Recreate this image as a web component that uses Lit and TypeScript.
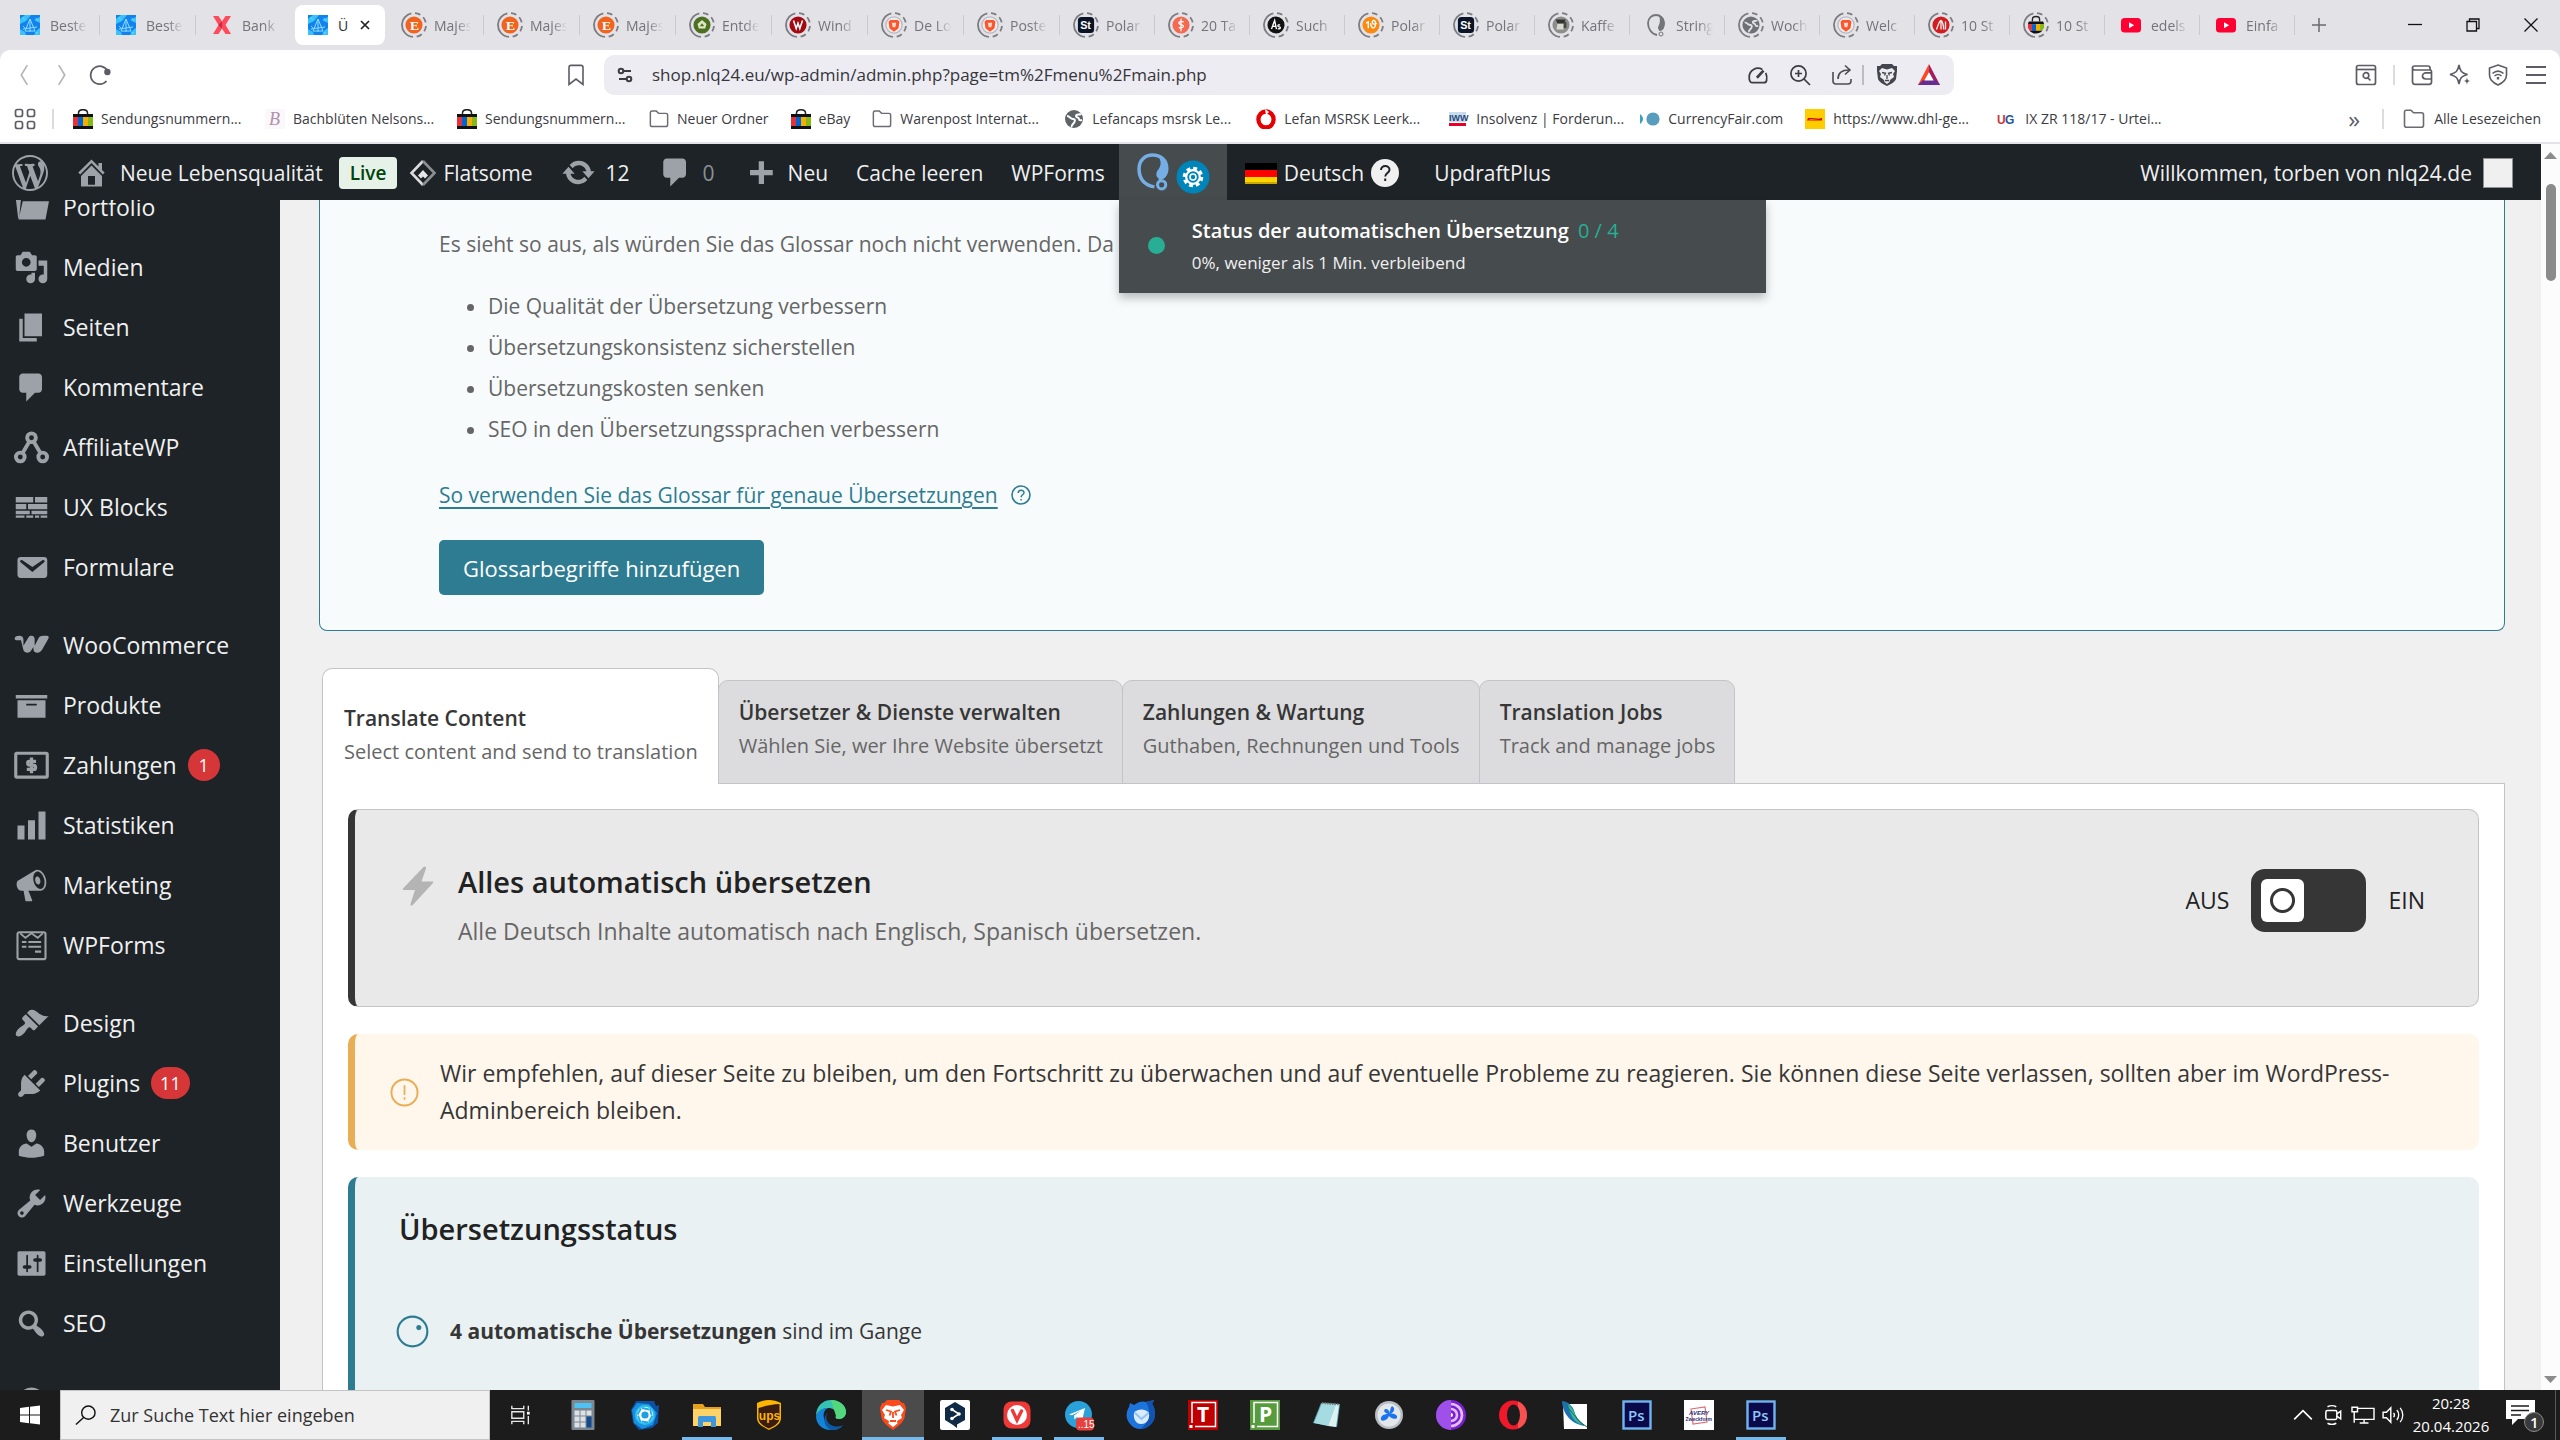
import { LitElement, html, css, svg, nothing } from "lit";
import type { TemplateResult } from "lit";
import { customElement, property, state } from "lit/decorators.js";
import { classMap } from "lit/directives/class-map.js";

/* ---------- icons ---------- */

const dash: Record<string, string> = {
  wordpress:
    "M20 10c0-5.51-4.49-10-10-10C4.48 0 0 4.49 0 10c0 5.52 4.48 10 10 10 5.51 0 10-4.48 10-10zM7.78 15.37L4.37 6.22c.55-.02 1.17-.08 1.17-.08.5-.06.44-1.13-.06-1.11 0 0-1.45.11-2.37.11-.18 0-.37 0-.58-.01C4.12 2.69 6.87 1.11 10 1.11c2.33 0 4.45.87 6.05 2.34-.68-.11-1.65.39-1.65 1.58 0 .74.45 1.36.9 2.1.35.61.55 1.36.55 2.46 0 1.49-1.4 5-1.4 5l-3.03-8.37c.54-.02.82-.17.82-.17.5-.05.44-1.25-.06-1.22 0 0-1.44.12-2.38.12-.87 0-2.33-.12-2.33-.12-.5-.03-.56 1.2-.06 1.22l.92.08 1.26 3.41zM17.41 10c.24-.64.74-1.87.43-4.25.7 1.29 1.05 2.71 1.05 4.25 0 3.29-1.73 6.24-4.4 7.78.97-2.59 1.94-5.2 2.92-7.78zM6.1 18.09C3.12 16.65 1.11 13.53 1.11 10c0-1.3.23-2.48.72-3.59C3.25 10.3 4.67 14.2 6.1 18.09zm4.03-6.63l2.58 6.98c-.86.29-1.76.45-2.71.45-.79 0-1.57-.11-2.29-.33.81-2.38 1.62-4.74 2.42-7.1z",
  home: "M16 8.5l1.53 1.53-1.06 1.06L10 4.6l-6.47 6.49-1.06-1.06L10 2.5l4 4v-2h2v4zm-6-2.46l6 5.99V18H4v-5.97zM12 17v-5H8v5h4z",
  update:
    "M10.2 3.28c3.53 0 6.43 2.61 6.92 6h2.08l-3.5 4-3.5-4h2.32c-.45-1.97-2.21-3.45-4.32-3.45-1.45 0-2.73.71-3.54 1.78L4.95 5.66C6.23 4.2 8.11 3.28 10.2 3.28zm-.4 13.44c-3.52 0-6.43-2.61-6.92-6H.8l3.5-4c1.17 1.33 2.33 2.67 3.5 4H5.48c.45 1.97 2.21 3.45 4.32 3.45 1.45 0 2.73-.71 3.54-1.78l1.71 1.95c-1.28 1.46-3.15 2.38-5.25 2.38z",
  comments: "M5 2h9c1.1 0 2 .9 2 2v7c0 1.1-.9 2-2 2h-2l-5 5v-5H5c-1.1 0-2-.9-2-2V4c0-1.1.9-2 2-2z",
  plus: "M17 8.5v3h-5v5H9v-5H4v-3h5v-5h3v5h5z",
  portfolio:
    "M.8 3h3.4L3 15.6l-.6.8zM5.2 5.6 8 4.4l1-1.2h4l1.2 1.2h4.4v1.2zM5 6.4h15l-2 10.4H2.6z",
  media:
    "M13 11V4c0-.55-.45-1-1-1h-1.67L9 1H5L3.67 3H2c-.55 0-1 .45-1 1v7c0 .55.45 1 1 1h10c.55 0 1-.45 1-1zM7 4.5c1.38 0 2.5 1.12 2.5 2.5S8.38 9.5 7 9.5 4.5 8.38 4.5 7 5.62 4.5 7 4.5zM14 6h5v10.5c0 1.38-1.12 2.5-2.5 2.5S14 17.88 14 16.5s1.12-2.5 2.5-2.5c.17 0 .34.02.5.05V9h-3V6zm-4 8.05V13h2v3.5c0 1.38-1.12 2.5-2.5 2.5S7 17.88 7 16.5 8.12 14 9.5 14c.17 0 .34.02.5.05z",
  page: "M6 15V2h10v13H6zm-1 1h8v2H3V5h2v11z",
  email:
    "M3.87 4h13.25C18.37 4 19 4.59 19 5.79v8.42c0 1.19-.63 1.79-1.88 1.79H3.87c-1.25 0-1.88-.6-1.88-1.79V5.79c0-1.2.63-1.79 1.88-1.79zm6.62 8.6l6.74-5.53c.24-.2.43-.66.13-1.07-.29-.41-.82-.42-1.17-.17l-5.7 3.86L4.8 5.83c-.35-.25-.88-.24-1.17.17-.3.41-.11.87.13 1.07z",
  blocks:
    "M1 4h10v3.2H1zM12 4h7v3.2h-7zM1 8h6v3H1zM8 8h11v3H8zM1 11.8h8v2H1zM10 11.8h9v2h-9zM1 14.6h5v1.2H1zM7 14.6h4v1.2H7zM12 14.6h2.4v1.2H12zM15.2 14.6H19v1.2h-3.8z",
  archive: "M19 4v2H1V4h18zM2 7h16v10H2V7zm11 3V9H7v1h6z",
  chart: "M18 18V2h-4v16h4zm-6 0V7H8v11h4zm-6 0v-8H2v8h4z",
  megaphone:
    "M18.15 5.94c.46 1.62.38 3.22-.02 4.48-.42 1.28-1.26 2.18-2.3 2.48-.16.06-.26.06-.4.06-.06.02-.12.02-.18.02-.06.02-.14.02-.22.02h-6.8l2.22 5.5c.02.14-.06.26-.14.34-.08.1-.24.16-.34.16H6.95c-.1 0-.26-.06-.34-.16-.08-.08-.16-.2-.14-.34l-1-5.5H4.25l-.02-.02c-.5.06-1.08-.18-1.54-.62s-.88-1.08-1.06-1.88c-.24-.8-.2-1.56-.02-2.2.18-.62.58-1.08 1.06-1.3l.02-.02 9-5.4c.1-.06.18-.1.24-.16.06-.04.14-.08.24-.12.16-.08.28-.12.5-.18 1.04-.3 2.24.1 3.22.98s1.84 2.24 2.26 3.86zm-2.58 5.98h-.02c.4-.1.74-.34 1.04-.7.58-.7.86-1.76.86-3.04 0-.64-.1-1.3-.28-1.98-.34-1.36-1.02-2.5-1.78-3.24s-1.68-1.1-2.46-.88c-.82.22-1.4.96-1.7 2-.32 1.04-.28 2.36.06 3.72.38 1.36 1 2.5 1.8 3.24.78.74 1.62 1.1 2.48.88zm-2.54-7.08c.22-.04.42-.02.62.04.38.16.76.48 1.02 1s.42 1.2.42 1.78c0 .3-.04.56-.12.8-.18.48-.44.84-.86.94-.34.1-.8-.06-1.14-.4s-.64-.86-.78-1.5c-.18-.62-.12-1.24.02-1.72s.48-.84.82-.94z",
  appearance:
    "M14.48 11.06L7.41 3.99l1.5-1.5c.5-.56 2.3-.47 3.51.32 1.21.8 1.43 1.28 2.91 2.1 1.18.64 2.45 1.26 4.45.85zm-.71.71L6.7 4.7 4.93 6.47c-.39.39-.39 1.02 0 1.41l1.06 1.06c.39.39.39 1.03 0 1.42-.6.6-1.43 1.11-2.21 1.69-.35.26-.7.53-1.01.84C1.43 14.23.4 16.08 1.4 17.07c.99 1 2.84-.03 4.18-1.36.31-.31.58-.66.85-1.02.57-.78 1.08-1.61 1.69-2.21.39-.39 1.02-.39 1.41 0l1.06 1.06c.39.39 1.02.39 1.41 0z",
  plugins:
    "M13.11 4.36L9.87 7.6 8 5.73l3.24-3.24c.35-.34 1.05-.2 1.56.32.52.51.66 1.21.31 1.55zm-8 1.77l.91-1.12 9.01 9.01-1.19.84c-.71.71-2.63 1.16-3.82 1.16H6.14L4.9 17.26c-.59.59-1.54.59-2.12 0-.59-.58-.59-1.53 0-2.12l1.24-1.24v-3.88c0-1.13.4-3.19 1.09-3.89zm7.26 3.97l3.24-3.24c.34-.35 1.04-.21 1.55.31.52.51.66 1.21.31 1.55l-3.24 3.25z",
  users:
    "M10 9.25c-2.27 0-2.73-3.44-2.73-3.44C7 4.02 7.82 2 9.97 2c2.16 0 2.98 2.02 2.71 3.81 0 0-.41 3.44-2.68 3.44zm0 2.57L12.72 10c2.39 0 4.52 2.33 4.52 4.53v2.49s-3.65 1.13-7.24 1.13c-3.65 0-7.24-1.13-7.24-1.13v-2.49c0-2.25 1.94-4.48 4.47-4.48z",
  tools:
    "M16.68 9.77c-1.34 1.34-3.3 1.67-4.95.99l-5.41 6.52c-.99.99-2.59.99-3.58 0s-.99-2.59 0-3.57l6.52-5.42c-.68-1.65-.35-3.61.99-4.95 1.28-1.28 3.12-1.62 4.72-1.06l-2.89 2.89 2.82 2.82 2.86-2.87c.53 1.58.18 3.39-1.08 4.65zM3.81 16.21c.4.39 1.04.39 1.43 0 .4-.4.4-1.04 0-1.43-.39-.4-1.03-.4-1.43 0-.39.39-.39 1.03 0 1.43z",
  settings:
    "M18 16V4c0-.55-.45-1-1-1H3c-.55 0-1 .45-1 1v12c0 .55.45 1 1 1h14c.55 0 1-.45 1-1zM8 11h1c.55 0 1 .45 1 1s-.45 1-1 1H8v1.5c0 .28-.22.5-.5.5s-.5-.22-.5-.5V13H6c-.55 0-1-.45-1-1s.45-1 1-1h1V5.5c0-.28.22-.5.5-.5s.5.22.5.5V11zm5-2h-1c-.55 0-1-.45-1-1s.45-1 1-1h1V5.5c0-.28.22-.5.5-.5s.5.22.5.5V7h1c.55 0 1 .45 1 1s-.45 1-1 1h-1v5.5c0 .28-.22.5-.5.5s-.5-.22-.5-.5V9z",
  search:
    "M12.14 4.18c1.87 1.87 2.11 4.75.72 6.89.12.1.22.21.36.31.2.16.47.36.81.59.34.24.56.39.66.47.42.31.73.57.94.78.32.32.6.65.84 1 .25.35.44.69.59 1.04.14.35.21.68.18 1-.02.32-.14.59-.36.81s-.49.34-.81.36c-.31.02-.65-.04-.99-.19-.35-.14-.7-.34-1.04-.59-.35-.24-.68-.52-1-.84-.21-.21-.47-.52-.77-.93-.1-.13-.25-.35-.47-.66-.22-.32-.4-.57-.56-.78-.16-.2-.29-.35-.44-.5-2.07 1.09-4.69.76-6.44-.98-2.14-2.15-2.14-5.64 0-7.78 2.15-2.15 5.63-2.15 7.78 0zm-1.41 6.36c1.36-1.37 1.36-3.58 0-4.95-1.37-1.37-3.59-1.37-4.95 0-1.37 1.37-1.37 3.58 0 4.95 1.36 1.37 3.58 1.37 4.95 0z",
  round: "M10 2a8 8 0 1 0 .01 0z",
};

/* Line and colour icons: view box size and content. */
const shapes: Record<string, [number, TemplateResult<2>]> = {
  affiliate: [20, svg`<g fill="none" stroke="currentColor" stroke-width="2.2"><circle cx="10" cy="4.4" r="2.5"/><circle cx="3.6" cy="15.4" r="2.5"/><circle cx="16.4" cy="15.4" r="2.5"/><path d="M8.8 6.6 4.9 13.2M11.2 6.6l3.9 6.6"/></g>`],
  woo: [20, svg`<path d="M.4 6.2C.4 5 1.200 4.400 3 4.400c1.600 0 2.400.8 2.400 2.400v3.400l3-5c.4-.6.8-.8 1.600-.8 1.200 0 1.800.8 1.800 2v3.800l2.200-4.400c.6-1 1.400-1.400 2.800-1.400h1.800c1.200 0 1.600.7 1 1.800l-3.400 6c-.8 1.300-1.600 1.900-2.800 1.900-1.600 0-2.300-.9-2.300-2.300v-.9l-1.400 2.1c-.6.8-1.300 1.100-2.200 1.100-1.500 0-2-.8-2.300-2.200L4 7H1.400c-.7 0-1-.3-1-.8z" fill="currentColor"/>`],
  money: [20, svg`<rect x="1" y="3" width="18" height="13.600" rx=".6" fill="none" stroke="currentColor" stroke-width="1.800"/><path d="M12.600 7.600H8.600c-1 0-1 2 0 2.100l2.800.2c1.200.1 1.200 2.300 0 2.300H7.300M10 5.400v9" fill="none" stroke="currentColor" stroke-width="1.900"/>`],
  wpforms: [20, svg`<rect x="2" y="2.400" width="16" height="15.400" rx="1" fill="none" stroke="currentColor" stroke-width="1.200"/><path d="M3.500 3l3 2.600 3.500-2.600 3.500 2.600 3-2.600" fill="none" stroke="currentColor"/><path d="M4.500 8h2.600M8.200 8h7.300M4.500 10.700h2.600M8.200 10.700h7.300M12 13.500h3.500" stroke="currentColor" stroke-width="1.200"/>`],
  flatsome: [28, svg`<path d="M14 2 2.500 14 14 26" fill="none" stroke="#dcdcde" stroke-width="2.600"/><path d="M14 2l11.500 12L14 26" fill="none" stroke="#8b8f94" stroke-width="2.600"/><path d="M9 16.500 14 11l5 5.500-3 3-2-2-2 2z" fill="#e6e6e8"/>`],
  otgs: [38, svg`<path d="M17 33C6 31 2 24 2 15 2 7 8 2 15 2c8 0 14 5 14 13 0 6-4 10-8 10" fill="none" stroke="#74aee4" stroke-width="3.400"/><path d="M20 3c6 1 10 6 10 12 0 5-2 9-5 10-4 1-7-2-6-5 0-3 4-5 4-10 0-3-1-5-3-7z" fill="#74aee4"/><circle cx="24" cy="31" r="4" fill="none" stroke="#74aee4" stroke-width="3"/>`],
  gear: [34, svg`<circle cx="17" cy="17" r="16.500" fill="#0085ba"/><circle cx="17" cy="17" r="8.600" fill="none" stroke="#fff" stroke-width="3.400" stroke-dasharray="3.800 2.950"/><circle cx="17" cy="17" r="6.800" fill="none" stroke="#fff" stroke-width="2.200"/><circle cx="17" cy="17" r="3" fill="none" stroke="#fff" stroke-width="1.600"/>`],
  flag: [32, svg`<path d="M0 6h32v7H0z" fill="#000"/><path d="M0 13h32v8H0z" fill="#f00"/><path d="M0 20h32v7H0z" fill="#ffd500"/><path d="M0 25h32v2H0z" fill="#c9a800"/>`],
  help: [22, svg`<circle cx="11" cy="11" r="9" fill="none" stroke="currentColor" stroke-width="1.600"/><path d="M8.200 9c0-3.600 5.800-3.600 5.800-.3 0 2-2.900 2.200-2.900 4.500M11.100 15v1.600" fill="none" stroke="currentColor" stroke-width="1.500"/>`],
  helpFilled: [28, svg`<circle cx="14" cy="14" r="14" fill="#f0f0f1"/><path d="M10 11c0-5.500 8.500-5 8.500-.3 0 3.300-4.300 3.300-4.300 6.800M14.200 19.500v2.600" fill="none" stroke="#1d2327" stroke-width="2"/>`],
  bolt: [40, svg`<path d="M25.500 1 5 22.500c-.6.9-.2 1.500.8 1.500H17L12.500 38c-.4 1.600 1 2.200 2 1.200L35 17c.7-1 .3-1.500-.8-1.500H23.500L28 2.500C28.500.8 26.800-.3 25.500 1z" fill="#b4b4b4"/>`],
  warn: [30, svg`<circle cx="15" cy="15" r="13.500" fill="none" stroke="#e8ad55" stroke-width="2"/><path d="M15 7.500v10M15 20v2.500" stroke="#e8ad55" stroke-width="1.800"/>`],
  spinner: [34, svg`<circle cx="17" cy="17" r="15.300" fill="none" stroke="#2e7c92" stroke-width="2.200"/><circle cx="23.500" cy="13" r="2.600" fill="#2e7c92"/>`],

  back: [20, svg`<path d="M13 1 7.500 10 13 19" fill="none" stroke="#b4b4ba" stroke-width="1.500"/>`],
  forward: [20, svg`<path d="M7 1l5.500 9L7 19" fill="none" stroke="#b4b4ba" stroke-width="1.500"/>`],
  reload: [22, svg`<path d="M18.500 6.800A9 9 0 1 0 17.500 17" fill="none" stroke="#5c5c66" stroke-width="1.700"/><circle cx="18.400" cy="8" r="3.200" fill="#5c5c66"/>`],
  bookmark: [22, svg`<path d="M4 3.500C4 2 4.600 1.400 6 1.400h10c1.400 0 2 .6 2 2.100v17l-7-5.500-7 5.500z" fill="none" stroke="#5c5c66" stroke-width="1.600"/>`],
  tune: [18, svg`<g fill="none" stroke="#3c3c44" stroke-width="2"><circle cx="5" cy="5" r="2.300"/><path d="M8 5h7"/><circle cx="13" cy="13" r="2.300"/><path d="M3 13h7"/></g>`],
  gauge: [20, svg`<path d="M4.500 17C2.500 16.500 2 15 2 12a8 8 0 0 1 12-7M17 8c1 2 1.200 5 .8 7-.3 1.400-1 2-2.300 2h-11" fill="none" stroke="#3c3c44" stroke-width="1.600"/><path d="M9 12.500 15 6" stroke="#3c3c44" stroke-width="2.400"/>`],
  zoomIn: [22, svg`<g fill="none" stroke="#3c3c44" stroke-width="1.700"><circle cx="9.500" cy="9.500" r="7.600"/><path d="M15 15l6 6M9.500 6v7M6 9.500h7"/></g>`],
  share: [22, svg`<g fill="none" stroke="#4c4c55" stroke-width="1.600"><path d="M2 8v9c0 2 1 3 3 3h12c2 0 3-1 3-3v-2"/><path d="M7 15c0-6 4-9 11-9M14 1.500 19 6l-5 4.500"/></g>`],
  braveDark: [22, svg`<path d="M6 0h10l2 2h3v5l-1 8c-1 3-5 5-9 7-4-2-8-4-9-7L1 7V2h3z" fill="#45454f"/><path d="M6 4l5 1.500L16 4l3 3-2 3 1 3-4 3-.5 2L11 20l-2.500-2-.5-2-4-3 1-3-2-3z" fill="#ededf2"/><path d="M6 8.500l3.500.8-1 2.200M16 8.500l-3.500.8 1 2.200M11 11v4M9 16.500h4" stroke="#45454f" fill="none" stroke-width="1.300"/>`],
  bat: [22, svg`<path d="M11 0 0 21h5L11 9z" fill="#ff4724"/><path d="M11 0l11 21h-5L11 9z" fill="#9e1f63"/><path d="M0 21h22L17.500 16H5z" fill="#662d91"/><path d="M11 8.200 6.300 16.400h9.400z" fill="#fff"/>`],
  sideSearch: [22, svg`<g fill="none" stroke="#5c5c66" stroke-width="1.700"><rect x="1.500" y="1.500" width="19" height="19" rx="2"/><path d="M1.500 5.500h19"/><circle cx="11" cy="11.500" r="2.800"/><path d="M13 14l2.500 2.500"/></g>`],
  wallet: [22, svg`<g fill="none" stroke="#5c5c66" stroke-width="1.700"><path d="M19 6V4c0-1.500-.8-2-2-2H3.500C2 2 1.500 3 1.500 4s.8 2 2 2H19c1 0 1.500.6 1.500 1.600V18c0 1.500-1 2.300-2.300 2.300H4c-1.600 0-2.500-1-2.500-2.500V4M20.500 8.800h-5.500c-2 0-3.500 1.500-3.500 3.200s1.500 3 3.500 3h5.500"/></g>`],
  sparkle: [22, svg`<path d="M10 1c1 6 2.500 8 8.500 9.500-6 1.500-7.500 3.500-8.500 9.500C9 14 7 12 1 10.500 7 9 9 7 10 1z" fill="none" stroke="#5c5c66" stroke-width="1.600"/><path d="M18 13.500c.3 2.600 1 3.200 3.600 3.600-2.600.4-3.300 1-3.600 3.600-.4-2.600-1-3.200-3.600-3.600 2.600-.4 3.200-1 3.600-3.600z" fill="#5c5c66"/>`],
  vpn: [22, svg`<g fill="none" stroke="#5c5c66" stroke-width="1.600"><path d="M11 1l8.500 3v7c0 5-4 8-8.500 10-4.500-2-8.500-5-8.500-10V4z"/><path d="M5.500 9.500c3.500-3 7.500-3 11 0M7.500 12c2.300-2 4.700-2 7 0"/><path d="M11 13v2.500" stroke-width="2.400"/></g>`],
  menu: [22, svg`<path d="M1 3h20M1 11h20M1 19h20" stroke="#5c5c66" stroke-width="2"/>`],
  apps: [22, svg`<g fill="none" stroke="#5c5c66" stroke-width="1.700"><rect x="1.500" y="1.500" width="7" height="7" rx="2"/><rect x="13.500" y="1.500" width="7" height="7" rx="2"/><rect x="1.500" y="13.500" width="7" height="7" rx="2"/><rect x="13.500" y="13.500" width="7" height="7" rx="2"/></g>`],
  folder: [22, svg`<path d="M1.500 4c0-1.200.6-1.800 1.800-1.800H8l2.500 2.600h8c1.300 0 2 .6 2 1.900v10.500c0 1.300-.7 2-2 2H3.500c-1.300 0-2-.7-2-2z" fill="none" stroke="#6b6b74" stroke-width="1.600"/>`],
  ebay: [20, svg`<path d="M5.500 6V4C5.500-.5 14.500-.5 14.500 4V6" fill="none" stroke="#222" stroke-width="1.500"/><path d="M0 5h20v3H0z" fill="#111"/><path d="M0 8h5v9H0z" fill="#e53238"/><path d="M5 8h5v9H5z" fill="#0064d2"/><path d="M10 8h5v9h-5z" fill="#f5af02"/><path d="M15 8h5v9h-5z" fill="#86b817"/><path d="M0 17h20v3H0z" fill="#111"/>`],
  ebayRound: [20, svg`<path d="M6 6V3.500C6-.5 14-.5 14 3.500V6" fill="none" stroke="#222" stroke-width="1.500"/><path d="M2 6h16l1 3H1z" fill="#111"/><path d="M1 9h4.500v7.500H3L1 13z" fill="#e53238"/><path d="M5.500 9H10v7.500H5.500z" fill="#0064d2"/><path d="M10 9h4.500v7.500H10z" fill="#f5af02"/><path d="M14.500 9H19v4l-2 3.500h-2.500z" fill="#86b817"/><path d="M3 16.500h14c-3 4-11 4-14 0z" fill="#111"/>`],
  globe: [20, svg`<circle cx="10" cy="10" r="9" fill="#5f6368"/><path d="M3 7c3 0 3 3 6 3s2 3 0 5-1 3-1 3M17 5c-2 1-5 0-5 2s3 1 3 3 3 1 3 1" fill="none" stroke="#fff" stroke-width="2"/>`],
  script: [20, svg`<rect width="20" height="20" fill="#fbf8fb"/><text x="4" y="16" font-family="Liberation Serif, serif" font-style="italic" font-size="18" fill="#b48fae">B</text>`],
  vodafone: [20, svg`<ellipse cx="10" cy="10.500" rx="7.600" ry="8" fill="none" stroke="#e60000" stroke-width="4.300"/><path d="M9 0l4 3-3 3z" fill="#fff"/>`],
  iww: [20, svg`<path d="M1 3h17v10H1z" fill="#c9dcec"/><text x="1" y="12" font-family="Liberation Sans, sans-serif" font-weight="700" font-size="9" fill="#1f4a7a">IWW</text><path d="M1 14h17v3H1z" fill="#e4002b"/>`],
  currency: [20, svg`<path d="M0 5c4 3 4 7 0 10z" fill="#3f9fc0"/><circle cx="13" cy="10" r="6.600" fill="#589dbd"/>`],
  dhl: [20, svg`<path d="M0 0h20v20H0z" fill="#fc0"/><path d="M3 9h14v2.500H2z" fill="#d40511"/><path d="M4 11l12-2" stroke="#fc0" stroke-width=".6"/>`],
  ug: [20, svg`<text x="0" y="15" font-family="Liberation Sans, sans-serif" font-weight="700" font-size="12" fill="#d0343c">U</text><text x="8" y="15" font-family="Liberation Sans, sans-serif" font-weight="700" font-size="12" fill="#2456a0">G</text>`],

  water: [20, svg`<rect width="20" height="20" fill="#1283ee"/><path d="M0 4 5 0h6L6 6l-6 3zM20 2v6l-6-3zM0 20v-6l5 3 1 3zM20 20h-6l3-5 3-2z" fill="#38c3fb"/><path d="M10 4l5 12H5zM10 4v13M3 14l14-2" fill="none" stroke="#8fdcff" stroke-width="1"/><path d="M2 2l3 3M16 3l2 3M3 11l2 2M15 17l3 1" stroke="#6fd3ff"/>`],
  redx: [20, svg`<path d="M1 1h5.500l3.500 5.500L13.500 1H19l-5.500 9L19 19h-5.500L10 13.500 6.500 19H1l5.500-9z" fill="#ff4a5c"/><path d="M10 6.500v7L6.500 10z" fill="#c42a45"/>`],
  etsy: [20, svg`<circle cx="10" cy="10" r="9.500" fill="#f1641e"/><text x="5.600" y="15.500" font-family="Liberation Serif, serif" font-weight="700" font-size="15" fill="#fff">E</text>`],
  green: [20, svg`<circle cx="10" cy="10" r="9.500" fill="#4c7021"/><path d="M10 4.500 15 9l-1.500 5h-7L5 9z" fill="#dfe8c4"/><path d="M10 8l2.500 3.500h-5z" fill="#4c7021"/>`],
  redw: [20, svg`<circle cx="10" cy="10" r="9.500" fill="#a00a10"/><path d="M5 5l3 9 2-6 2 6 3-9" fill="none" stroke="#fff" stroke-width="1.700"/>`],
  brave: [20, svg`<circle cx="10" cy="10" r="9" fill="#f1ecec" stroke="#b9b9c0" stroke-width="1.500"/><path d="M6 4.500h8l2 2-1 7-5 4-5-4-1-7z" fill="#fb542b"/><path d="M7.500 7.500h5l-1 5h-3z" fill="#ffd9cd"/>`],
  st: [20, svg`<rect x="1" y="1" width="18" height="18" rx="4" fill="#0b1426"/><text x="3.500" y="14.500" font-family="Liberation Sans, sans-serif" font-weight="700" font-size="12" fill="#fff">St</text>`],
  rod: [20, svg`<circle cx="10" cy="10" r="9.500" fill="#f46a50"/><path d="M10 3v14M13 6.500c-6-1.500-7 2-3 3s4 4-2.500 3.500" fill="none" stroke="#fff" stroke-width="1.400"/>`],
  as: [20, svg`<circle cx="10" cy="10" r="9.500" fill="#111"/><path d="M5 14.500 8.500 5l2 9.500M6 11.500h4M14.500 10c-3-1-3 2-1 2s2 3-1.500 2.200" fill="none" stroke="#fff" stroke-width="1.500"/>`],
  vita: [20, svg`<circle cx="10" cy="10" r="9.500" fill="#f88a12"/><path d="M4.500 8 7 6.500v7M9.500 8c1 8 5.500 6 5.500 0 0-4.500-4-3.500-3.500-.5.300 2 3 1.800 5 .7" fill="none" stroke="#fff" stroke-width="1.500"/>`],
  photo: [20, svg`<circle cx="10" cy="10" r="9.500" fill="#8d8d8a"/><path d="M4 4h11l-1 4H6z" fill="#333"/><path d="M6 9h7v6H5z" fill="#d9d9d4"/><path d="M13 6l3 1v6l-3 1z" fill="#48483f"/>`],
  string: [26, svg`<path d="M14 23C8 22 5 16 5 11c0-5 4-8 8-8s8 3 8 8-2 7-5 7" fill="none" stroke="#74747b" stroke-width="1.800"/><path d="M16 3.500c4 1 5.500 4 5.500 7.500s-1.500 7-4 7-3-2-2-4c1.500-3 2-6 .5-10.500z" fill="#74747b"/><circle cx="18" cy="22" r="2" fill="none" stroke="#74747b"/>`],
  globeSmall: [20, svg`<circle cx="10" cy="10" r="9.500" fill="#6d7176"/><path d="M3 7c3 0 3 3 6 3s2 3 0 5-1 3-1 3M17 5c-2 1-5 0-5 2s3 1 3 3 3 1 3 1" fill="none" stroke="#e3e2e7" stroke-width="2"/>`],
  redA: [20, svg`<circle cx="10" cy="10" r="9.500" fill="#cf1d22"/><path d="M5 15c2-6 4-10 5-10s3 5 3 10M10 5v10M15 6v9" fill="none" stroke="#fbe9e4" stroke-width="1.500"/>`],
  youtube: [20, svg`<rect y="3" width="20" height="14.500" rx="3.500" fill="#f03"/><path d="M8 7.200v6l5.200-3z" fill="#fff"/>`],

  windows: [20, svg`<path d="M0 3l9-1.200v7.700H0zM10 1.700 20 .4v9.100H10zM0 10.500h9v7.700L0 17zM10 10.500h10v9.100l-10-1.300z" fill="#fff"/>`],
  lens: [22, svg`<circle cx="14" cy="8" r="7" fill="none" stroke="#111" stroke-width="1.500"/><path d="M9 13l-8 7.500" stroke="#111" stroke-width="1.500"/>`],
  taskview: [24, svg`<path d="M2 2v3h13V2M2 22v-3h13v3M2 8.500h13v7H2zM20 2v5M20 13v9" fill="none" stroke="#e8e8e8" stroke-width="1.500"/><path d="M18.500 8.500h3v3h-3z" fill="#fff"/>`],
  calc: [30, svg`<rect x="3.500" width="23" height="30" rx="1" fill="#7d8790"/><path d="M6.500 3h17v5h-17z" fill="#4cc2f5"/><g fill="#dce1e5"><path d="M6.500 10.500h5v5h-5zM12.500 10.500h5v5h-5zM18.500 10.500h5v5h-5zM6.500 16.500h5v5h-5zM12.500 16.500h5v5h-5zM6.500 22.500h5v5h-5zM12.500 22.500h5v5h-5z"/></g><path d="M18.500 16.500h5v11h-5z" fill="#134a8c"/>`],
  aperture: [30, svg`<path d="M6 1h18l2 5 3-1-1 18-6 5-13 2-6-7L1 10z" fill="#0d4fa0"/><path d="M2 10l5-7 12 1 8 9-4 12-11 4-8-6z" fill="#1a8fe0"/><circle cx="15" cy="15" r="10" fill="#27c4ef"/><circle cx="15" cy="15" r="8" fill="#fff"/><path d="M12 8l7 1.500M20 8.500l1.500 6.500M22.500 15.500l-3.500 6M18.500 22.500l-7-1M10.500 22l-2.500-6.500M7.500 14.500l3.500-6" stroke="#27a9e6" stroke-width="1.800"/><circle cx="15" cy="15" r="3.600" fill="#1b9fe0"/>`],
  explorer: [30, svg`<path d="M1 4h10l2 3h16v19H1z" fill="#e5a01c"/><path d="M1 9h28v17H1z" fill="#fdd267"/><path d="M6 27v-9c0-1.500.8-2 2-2h14c1.200 0 2 .5 2 2v9h-5v-5h-8v5z" fill="#3d97de"/>`],
  ups: [30, svg`<path d="M3 3c8-4 16-4 24 0v15c0 6-6 9-12 12C9 27 3 24 3 18z" fill="#ffb500"/><path d="M4.500 8c7-2 14-4 21-4v14c0 5-5 8-10.500 10.500C9.500 26 4.500 23 4.500 18z" fill="#3b1c10"/><text x="4.800" y="19.500" font-family="Liberation Sans, sans-serif" font-weight="700" font-size="12" fill="#ffb500">ups</text>`],
  edge: [30, svg`<path d="M0 16C0 6 7 0 15 0c9 0 15 6 15 12 0 4-3 7-7 7-3 0-4-1-3-3 1-4-2-8-7-8C7 8 2 11 0 16z" fill="#36c3b4"/><path d="M15 0c9 0 15 6 15 12 0 4-3 7-7 7-3 0-4-1-3-3z" fill="#53d77c"/><path d="M0 16c2-6 7-8 12-8-4 2-5 6-4 10 1 6 7 10 13 9 3 0 5-1 6-2-3 4-7 5-12 5C6 30 0 24 0 16z" fill="#1484d8"/><path d="M12 12c-3 4-2 10 3 13 4 2 9 2 12 0-3 4-7 5-12 5-7-3-9-12-3-18z" fill="#0c59a4"/>`],
  braveTask: [30, svg`<path d="M9 0h12l3 3h2l2 5-1.500 10C25 23 19 27 15 30 11 27 5 23 3.500 18L2 8l2-5h2z" fill="#fb4a1c"/><path d="M8 5l7 1.500L22 5l4 5-3 5 1 3-5 3 .5 2.500L15 27l-4.500-3.500.5-2.500-5-3 1-3-3-5z" fill="#fff"/><path d="M8 10l5 1.500-1.500 4M22 10l-5 1.500 1.500 4M15 12v6M12 21h6" fill="none" stroke="#fb4a1c" stroke-width="1.800"/>`],
  deepl: [30, svg`<rect width="30" height="30" rx="2" fill="#fff"/><path d="M15 2l10 6v12l-8 4.500V28l-4-3-8-5V8z" fill="#0f2b46"/><path d="M12 9.500l7 4.500-7 4.500" fill="none" stroke="#fff" stroke-width="1.500"/><circle cx="12" cy="9.500" r="1.800" fill="#fff"/><circle cx="19" cy="14" r="1.800" fill="#fff"/><circle cx="12" cy="18.500" r="1.800" fill="#fff"/>`],
  vivaldi: [30, svg`<rect x="1.500" y="1.500" width="27" height="27" rx="8" fill="#ef3939"/><circle cx="15" cy="15" r="10" fill="#fff"/><path d="M10.500 10.500 15 20l4.500-9" fill="none" stroke="#ef3939" stroke-width="3.400" stroke-linecap="round"/>`],
  telegram: [30, svg`<circle cx="14.500" cy="14.500" r="13.500" fill="#2aa1da"/><path d="M5 14.500 21 8l-3 13-5-4-2.500 2.500-.5-4 7-5-9 4.700z" fill="#fff"/><rect x="12" y="17.500" width="18" height="13" rx="4" fill="#e8403c"/><text x="14" y="28" font-family="Liberation Sans, sans-serif" font-size="10" fill="#fff">..15</text>`],
  thunderbird: [30, svg`<path d="M3 7l1-4 4 2c5-4 9-4 12-3l8-2-2 4c4 5 4 14 0 19-5 7-16 8-21 2C-1 19 0 12 3 7z" fill="#1d74da"/><path d="M20 2l8-2-2 4c4 5 4 14 0 19-3 4-7 6-11 6 8-7 11-18 5-27z" fill="#1153b0"/><path d="M8 13c4-5 12-4 15 0 1 6-2 11-8 11-5 0-8-5-7-11z" fill="#d8ecfd"/><path d="M9 13l6.500 6 7-6" fill="none" stroke="#8fc2f5" stroke-width="2"/>`],
  tile: [30, svg`<rect width="30" height="30" fill="#c00000"/><path d="M4 23V2.500h23.500v24H7" fill="none" stroke="#fff" stroke-width="1.500"/><rect x="1.500" y="25" width="3" height="3" fill="#fff"/><text x="9" y="22" font-family="Open Sans, sans-serif" font-weight="700" font-size="21" fill="#fff">T</text>`],
  tileP: [30, svg`<rect width="30" height="30" fill="#579c3c"/><path d="M4 23V2.500h23.500v24H7" fill="none" stroke="#fff" stroke-width="1.500"/><rect x="1.500" y="25" width="3" height="3" fill="#fff"/><text x="9" y="22" font-family="Open Sans, sans-serif" font-weight="700" font-size="21" fill="#fff">P</text>`],
  notes: [30, svg`<path d="M9 3l19 1-3 23-24-4z" fill="#57a9b8"/><path d="M10 3l14 1-8 22-14-3z" fill="#a7dbe2"/><path d="M24 4l3 1-3 22-8-1z" fill="#dff2f3"/><path d="M10 3l17 1.500" stroke="#777" stroke-width="2" stroke-dasharray="1.500 1"/>`],
  swirl: [30, svg`<circle cx="15" cy="15" r="14" fill="#b9bec5"/><circle cx="15" cy="15" r="11.500" fill="#e4e7ea"/><path d="M18 6c4 2 2 7-2 8 4-1 8 1 7 4-3 2-6 0-8-2-1 3-5 6-8 4-1-4 3-6 7-6-3-1-5-3-3-5 3 0 5 2 5 5 0-3 0-6 2-8z" fill="#1b74ee"/>`],
  tor: [30, svg`<circle cx="15" cy="15" r="15" fill="#7d1fd0"/><path d="M15 0a15 15 0 0 0 0 30z" fill="#a050ea"/><path d="M15 4a11 11 0 0 1 0 22M15 9a6 6 0 0 1 0 12" fill="none" stroke="#e0bdfb" stroke-width="2.600"/><path d="M15 13a2 2 0 0 1 0 4z" fill="#fff"/>`],
  opera: [30, svg`<ellipse cx="15" cy="15" rx="14" ry="14.500" fill="#f0182b"/><path d="M20 1.500c6 2 9 8 9 13.500s-3 12-9 13.500z" fill="#f9514f"/><ellipse cx="15.500" cy="15" rx="6.500" ry="10.500" fill="#1c1c1c"/>`],
  feather: [30, svg`<path d="M3 4h24v25H4z" fill="#fdfdfd"/><path d="M2 1c8 1 12 7 13 13l3 5 7 7C16 25 3 18 2 1z" fill="#1d6fb8"/><path d="M8 4c5 4 7 9 8 14l6 7C15 23 10 16 8 4z" fill="#38b596"/><path d="M4 3l16 19 7 5" fill="none" stroke="#1c7a48"/>`],
  ps: [30, svg`<rect x="1.500" y="1.500" width="27" height="27" fill="#0a0a4a" stroke="#6fb4f0" stroke-width="2.400"/><text x="6" y="20.500" font-family="Open Sans, sans-serif" font-weight="600" font-size="15" fill="#8fc6fa">Ps</text>`],
  avery: [30, svg`<rect width="30" height="30" fill="#fff"/><path d="M7 9l14-2 2 15-14 2z" fill="none" stroke="#e06a74" stroke-width="1.200"/><text x="5" y="15" font-family="Liberation Sans, sans-serif" font-weight="700" font-style="italic" font-size="6" fill="#2a2f7c">AVERY</text><text x="1.500" y="21" font-family="Liberation Sans, sans-serif" font-weight="700" font-size="5" fill="#2a2f7c">Zweckform</text>`],
  caret: [20, svg`<path d="M2 14l8-8 8 8" fill="none" stroke="#fff" stroke-width="1.500"/>`],
  meet: [20, svg`<rect x="3.500" y="6" width="10" height="8" rx="1.500" fill="none" stroke="#fff" stroke-width="1.400"/><path d="M13.500 9l3.500-2.500v7L13.500 11M5 2.500c3-1.500 5-1.500 8 0M5 17.500c3 1.500 5 1.500 8 0" fill="none" stroke="#fff" stroke-width="1.300"/>`],
  network: [20, svg`<path d="M5 4h15v10H2M11 14v3M7 17.200h8M2 7v10" fill="none" stroke="#fff" stroke-width="1.300"/><path d="M0 3h5v4H0z" fill="none" stroke="#fff" stroke-width="1.300"/>`],
  volume: [20, svg`<path d="M1 7.500h3l4-4v13l-4-4H1z" fill="none" stroke="#fff" stroke-width="1.300"/><path d="M10.500 8c1 1.200 1 2.800 0 4M13.500 5.500c2.200 2.500 2.200 6.500 0 9M16.500 3.500c3.200 3.800 3.200 9.200 0 13" fill="none" stroke="#fff" stroke-width="1.200"/>`],
  note: [38, svg`<path d="M0 4h29v19H12l-6 6v-6H0z" fill="#fff"/><path d="M5 10h18M5 14.500h18M5 19h10" stroke="#1c1c1c" stroke-width="1.400"/><circle cx="28" cy="26" r="9.500" fill="#3a3a3a" stroke="#8a8a8a"/><text x="24" y="31.500" font-family="Open Sans, sans-serif" font-weight="600" font-size="15" fill="#fff">1</text>`],
};

@customElement("ui-icon")
export class UiIcon extends LitElement {
  static styles = css`
    :host { display: inline-flex; flex: none; }
    svg { display: block; overflow: visible; }
  `;
  @property() name = "";
  @property({ type: Number }) size = 20;
  render() {
    const shape = shapes[this.name];
    if (shape) {
      return html`<svg aria-hidden="true" width=${this.size} height=${this.size} viewBox="0 0 ${shape[0]} ${shape[0]}">${shape[1]}</svg>`;
    }
    return html`<svg aria-hidden="true" width=${this.size} height=${this.size} viewBox="0 0 20 20">
      <path fill="currentColor" fill-rule="evenodd" d=${dash[this.name] ?? ""} />
    </svg>`;
  }
}

/* ---------- data ---------- */

interface Tab { icon: string; title: string; ring?: boolean; active?: boolean }
const tabs: Tab[] = [
  { icon: "water", title: "Beste" },
  { icon: "water", title: "Beste" },
  { icon: "redx", title: "Bank" },
  { icon: "water", title: "Ü", active: true },
  { icon: "etsy", title: "Majes", ring: true },
  { icon: "etsy", title: "Majes", ring: true },
  { icon: "etsy", title: "Majes", ring: true },
  { icon: "green", title: "Entde", ring: true },
  { icon: "redw", title: "Wind", ring: true },
  { icon: "brave", title: "De Lo", ring: true },
  { icon: "brave", title: "Poste", ring: true },
  { icon: "st", title: "Polar", ring: true },
  { icon: "rod", title: "20 Ta", ring: true },
  { icon: "as", title: "Such", ring: true },
  { icon: "vita", title: "Polar", ring: true },
  { icon: "st", title: "Polar", ring: true },
  { icon: "photo", title: "Kaffe", ring: true },
  { icon: "string", title: "String" },
  { icon: "globeSmall", title: "Woch", ring: true },
  { icon: "brave", title: "Welc", ring: true },
  { icon: "redA", title: "10 St", ring: true },
  { icon: "ebayRound", title: "10 St", ring: true },
  { icon: "youtube", title: "edels" },
  { icon: "youtube", title: "Einfa" },
];

const bookmarks: [string, string][] = [
  ["ebay", "Sendungsnummern..."],
  ["script", "Bachblüten Nelsons..."],
  ["ebay", "Sendungsnummern..."],
  ["folder", "Neuer Ordner"],
  ["ebay", "eBay"],
  ["folder", "Warenpost Internat..."],
  ["globe", "Lefancaps msrsk Le..."],
  ["vodafone", "Lefan MSRSK Leerk..."],
  ["iww", "Insolvenz | Forderun..."],
  ["currency", "CurrencyFair.com"],
  ["dhl", "https://www.dhl-ge..."],
  ["ug", "IX ZR 118/17 - Urtei..."],
];

const menu: [string, string, number?][][] = [
  [
    ["portfolio", "Portfolio"],
    ["media", "Medien"],
    ["page", "Seiten"],
    ["comments", "Kommentare"],
    ["affiliate", "AffiliateWP"],
    ["blocks", "UX Blocks"],
    ["email", "Formulare"],
  ],
  [
    ["woo", "WooCommerce"],
    ["archive", "Produkte"],
    ["money", "Zahlungen", 1],
    ["chart", "Statistiken"],
    ["megaphone", "Marketing"],
    ["wpforms", "WPForms"],
  ],
  [
    ["appearance", "Design"],
    ["plugins", "Plugins", 11],
    ["users", "Benutzer"],
    ["tools", "Werkzeuge"],
    ["settings", "Einstellungen"],
    ["search", "SEO"],
  ],
];

const pageTabs: [string, string][] = [
  ["Translate Content", "Select content and send to translation"],
  ["Übersetzer & Dienste verwalten", "Wählen Sie, wer Ihre Website übersetzt"],
  ["Zahlungen & Wartung", "Guthaben, Rechnungen und Tools"],
  ["Translation Jobs", "Track and manage jobs"],
];

const tasks: [string, string, string?][] = [
  ["taskview", "Taskansicht"],
  ["calc", "Rechner"],
  ["aperture", "Fotos"],
  ["explorer", "Explorer", "running"],
  ["ups", "UPS"],
  ["edge", "Edge"],
  ["braveTask", "Brave", "current"],
  ["deepl", "DeepL"],
  ["vivaldi", "Vivaldi", "running"],
  ["telegram", "Telegram", "running"],
  ["thunderbird", "Thunderbird"],
  ["tile", "TextMaker"],
  ["tileP", "PlanMaker"],
  ["notes", "Editor"],
  ["swirl", "Splash"],
  ["tor", "Tor"],
  ["opera", "Opera"],
  ["feather", "Zeichnen"],
  ["ps", "Photoshop"],
  ["avery", "Avery"],
  ["ps", "Photoshop", "running"],
];

const base = css`
  * { box-sizing: border-box; }
  button {
    font: inherit; color: inherit; background: none; border: 0; padding: 0;
    display: inline-flex; align-items: center; justify-content: center;
  }
  a { color: inherit; text-decoration: none; }
  ul { list-style: none; margin: 0; padding: 0; }
  p, h2 { margin: 0; }
`;

/* ---------- browser frame ---------- */

@customElement("browser-chrome")
export class BrowserChrome extends LitElement {
  static styles = [base, css`
    :host { display: block; flex: none; background: #e3e2e7; color: #3b3b42; font-size: 14px; border-bottom: 2px solid #e3e2e7; }
    .strip { display: flex; height: 50px; padding-left: 4px; }
    .tab { flex: 0 0 95px; min-width: 0; display: flex; align-items: center; position: relative; padding-left: 12px; color: #73737b; }
    .tab.wide { flex-basis: 96px; }
    .tab::after { content: ""; position: absolute; right: 0; top: 15px; height: 20px; width: 1px; background: #cbcad0; }
    .tab.plain::after { display: none; }
    .tab.active { margin: 5px 3px; padding-left: 9px; flex-basis: 90px; background: #fff; border-radius: 8px; color: #2b2b30; }
    .slot { display: grid; place-items: center; width: 28px; height: 28px; flex: none; position: relative; }
    .ring { position: absolute; inset: 1px; }
    .name { margin-left: 6px; width: 37px; overflow: hidden; white-space: nowrap; mask-image: linear-gradient(90deg, #000 60%, transparent); }
    .active .name { width: 12px; mask-image: none; }
    .close { width: 24px; height: 24px; margin-left: 3px; }
    .new { width: 48px; color: #6a6a72; }
    .controls { margin-left: auto; display: flex; }
    .controls button { width: 58px; }
    .white { background: #fff; border-radius: 10px 10px 0 0; }
    .toolbar { display: flex; align-items: center; height: 50px; padding: 0 13px; }
    .nav { display: flex; gap: 16px; align-items: center; flex: none; width: 552px; }
    .mark { flex: none; }
    .address { margin-left: 17px; display: flex; align-items: center; width: 1350px; flex: 0 1 1350px; height: 40px; background: #edecf2; border-radius: 10px; padding: 0 14px 0 12px; gap: 20px; }
    .address input { flex: 1; min-width: 0; border: 0; background: none; font: inherit; font-size: 17px; color: #35353b; outline: 0; padding: 0 0 2px; margin-left: -2px; }
    .bar { width: 2px; height: 20px; background: #dcdbe1; flex: none; }
    .address .bar { margin: 0 -8px 0 -11px; background: #bdbcc4; }
    .tools { margin-left: auto; display: flex; align-items: center; gap: 16px; }
    .marks { display: flex; align-items: center; height: 42px; padding: 0 19px 5px 14px; white-space: nowrap; }
    .marks .bar { margin: 0 19px 0 16px; }
    .item { display: flex; align-items: center; gap: 8px; padding-right: 22px; flex: none; }
    .item.long { width: 192px; overflow: hidden; padding-right: 0; }
    .more { margin-left: auto; margin-right: 6px; font-size: 24px; color: #5c5c66; }
    .all { display: flex; align-items: center; gap: 9px; }
  `];

  private ring = html`<svg class="ring" viewBox="0 0 26 26" aria-hidden="true">
    <circle cx="13" cy="13" r="12" fill="none" stroke="#7b7b83" stroke-width="1.800" pathLength="60" stroke-dasharray="27 3 4.500 3 4.500 3 4.500 3 4.500 3" transform="rotate(95 13 13)" />
  </svg>`;

  render() {
    return html`
      <nav class="strip" aria-label="Tabs">
        ${tabs.map((t, i) => html`
          <div class=${classMap({ tab: true, wide: i < 11, active: !!t.active, plain: i === 2 || !!t.active })}>
            <span class="slot">
              ${t.ring ? this.ring : nothing}
              <ui-icon .name=${t.icon} .size=${t.icon === "string" ? 26 : t.ring ? 18 : 20}></ui-icon>
            </span>
            <span class="name">${t.title}</span>
            ${t.active ? html`<button class="close" aria-label="Tab schließen">
              <svg width="10" height="10" viewBox="0 0 10 10"><path d="M1 1l8 8M9 1L1 9" stroke="#222" stroke-width="1.700"/></svg></button>` : nothing}
          </div>`)}
        <button class="new" aria-label="Neuer Tab"><svg width="14" height="14" viewBox="0 0 14 14"><path d="M7 0v14M0 7h14" stroke="currentColor" stroke-width="1.500"/></svg></button>
        <div class="controls">
          <button aria-label="Minimieren"><svg width="14" height="14" viewBox="0 0 14 14"><path d="M0 6.500h14" stroke="#111" stroke-width="1.300"/></svg></button>
          <button aria-label="Wiederherstellen"><svg width="14" height="14" viewBox="0 0 14 14"><path d="M1 3.500h9.500V13H1zM3.500 3.500V1H13v9.500h-2.500" fill="none" stroke="#111" stroke-width="1.300"/></svg></button>
          <button aria-label="Schließen"><svg width="14" height="14" viewBox="0 0 14 14"><path d="M.5.500l13 13M13.500.500l-13 13" stroke="#111" stroke-width="1.300"/></svg></button>
        </div>
      </nav>
      <div class="white">
        <div class="toolbar">
          <div class="nav">
            <button aria-label="Zurück"><ui-icon name="back" .size=${22}></ui-icon></button>
            <button aria-label="Vorwärts"><ui-icon name="forward" .size=${22}></ui-icon></button>
            <button aria-label="Neu laden"><ui-icon name="reload" .size=${22}></ui-icon></button>
          </div>
          <button class="mark" aria-label="Lesezeichen"><ui-icon name="bookmark" .size=${22}></ui-icon></button>
          <div class="address">
            <ui-icon name="tune" .size=${18}></ui-icon>
            <input type="text" aria-label="Adresse" .value=${"shop.nlq24.eu/wp-admin/admin.php?page=tm%2Fmenu%2Fmain.php"} />
            <ui-icon name="gauge" .size=${22}></ui-icon>
            <ui-icon name="zoomIn" .size=${22}></ui-icon>
            <ui-icon name="share" .size=${22}></ui-icon>
            <span class="bar"></span>
            <ui-icon name="braveDark" .size=${22}></ui-icon>
            <ui-icon name="bat" .size=${22}></ui-icon>
          </div>
          <div class="tools">
            <ui-icon name="sideSearch" .size=${22}></ui-icon>
            <span class="bar"></span>
            <ui-icon name="wallet" .size=${22}></ui-icon>
            <ui-icon name="sparkle" .size=${22}></ui-icon>
            <ui-icon name="vpn" .size=${22}></ui-icon>
            <ui-icon name="menu" .size=${22}></ui-icon>
          </div>
        </div>
        <div class="marks">
          <ui-icon name="apps" .size=${22}></ui-icon>
          <span class="bar"></span>
          ${bookmarks.map(([icon, label]) => html`
            <a href="#" class=${classMap({ item: true, long: label.endsWith("...") })}><ui-icon .name=${icon} .size=${20}></ui-icon>${label}</a>`)}
          <span class="more">»</span>
          <span class="bar"></span>
          <a href="#" class="all"><ui-icon name="folder" .size=${22}></ui-icon>Alle Lesezeichen</a>
        </div>
      </div>`;
  }
}

/* ---------- WordPress admin bar ---------- */

@customElement("admin-bar")
export class AdminBar extends LitElement {
  static styles = [base, css`
    :host { display: block; flex: none; background: #1d2327; color: #f0f0f1; font-size: 21px; position: relative; z-index: 2; }
    .row { display: flex; align-items: stretch; height: 56px; white-space: nowrap; padding: 1px 14px 0 0; }
    .item { display: flex; align-items: center; gap: 10px; padding: 0 14px; }
    .item.logo { padding: 0 14px 0 12px; }
    .item.home { padding-left: 12px; gap: 11px; padding-right: 16px; }
    .item.flat { gap: 6px; padding-left: 12px; }
    .item.lang { gap: 7px; padding-left: 18px; padding-right: 21px; }
    ui-icon { color: #9ca2a7; }
    .live { align-self: center; height: 32px; display: flex; align-items: center; padding: 0 11px; border-radius: 4px; background: #e6f2e8; color: #00450c; font-weight: 600; font-size: 19px; }
    .dim { color: #8c9196; }
    .open { background: #464b4d; position: relative; width: 108px; margin-top: -1px; padding: 0 0 0 18px; gap: 0; }
    .open ui-icon:last-of-type { margin-top: 10px; }
    .pop { position: absolute; left: 0; top: 56px; width: 647px; height: 93px; background: #464b4d; box-shadow: 0 5px 9px rgba(0, 0, 0, 0.25); display: flex; align-items: center; padding: 0 29px 2px; gap: 27px; }
    .dot { width: 17px; height: 17px; border-radius: 50%; background: #27ae94; flex: none; }
    .head { font-size: 20px; font-weight: 600; line-height: 34px; color: #fff; }
    .count { color: #27ae94; font-weight: 400; margin-left: 4px; }
    .sub { font-size: 17px; line-height: 30px; }
    .me { margin-left: auto; gap: 11px; }
    .avatar { width: 30px; height: 30px; background: #f0f0f1; border: 1px solid #8c8f94; }
  `];
  render() {
    return html`<div class="row">
      <a href="#" class="item logo"><ui-icon name="wordpress" .size=${36}></ui-icon></a>
      <a href="#" class="item home"><ui-icon name="home" .size=${35}></ui-icon>Neue Lebensqualität</a>
      <span class="live">Live</span>
      <a href="#" class="item flat"><ui-icon name="flatsome" .size=${28}></ui-icon>Flatsome</a>
      <a href="#" class="item"><ui-icon name="update" .size=${35}></ui-icon>12</a>
      <a href="#" class="item"><ui-icon name="comments" .size=${35}></ui-icon><span class="dim">0</span></a>
      <a href="#" class="item"><ui-icon name="plus" .size=${35}></ui-icon>Neu</a>
      <a href="#" class="item">Cache leeren</a>
      <a href="#" class="item">WPForms</a>
      <div class="item open">
        <ui-icon name="otgs" .size=${39}></ui-icon><ui-icon name="gear" .size=${34}></ui-icon>
        <div class="pop">
          <span class="dot"></span>
          <div>
            <p class="head">Status der automatischen Übersetzung <span class="count">0 / 4</span></p>
            <p class="sub">0%, weniger als 1 Min. verbleibend</p>
          </div>
        </div>
      </div>
      <a href="#" class="item lang"><ui-icon name="flag" .size=${32}></ui-icon>Deutsch<ui-icon name="helpFilled" .size=${28}></ui-icon></a>
      <a href="#" class="item">UpdraftPlus</a>
      <a href="#" class="item me">Willkommen, torben von nlq24.de<span class="avatar"></span></a>
    </div>`;
  }
}

@customElement("admin-menu")
export class AdminMenu extends LitElement {
  static styles = [base, css`
    :host { display: block; flex: none; width: 280px; background: #1d2327; color: #f0f0f1; font-size: 23px; overflow: hidden; }
    nav { margin-top: -23px; }
    ul + ul { margin-top: 18px; }
    .link { display: flex; align-items: center; height: 60px; padding-left: 14px; gap: 14px; white-space: nowrap; }
    ui-icon { color: #9ca2a7; }
    .badge { min-width: 32px; height: 32px; padding: 0 9px; border-radius: 16px; background: #d63638; color: #fff; font-size: 18px; display: grid; place-items: center; margin-left: -3px; }
  `];
  render() {
    return html`<nav aria-label="Hauptmenü">
      ${menu.map((group) => html`<ul>${group.map(([icon, label, count]) => html`
        <li><a href="#" class="link"><ui-icon .name=${icon} .size=${35}></ui-icon>${label}${count ? html`<span class="badge">${count}</span>` : nothing}</a></li>`)}</ul>`)}
      <ul><li><a href="#" class="link" aria-label="Mehr"><ui-icon name="round" .size=${35}></ui-icon></a></li></ul>
    </nav>`;
  }
}

/* ---------- page ---------- */

@customElement("translation-page")
export class TranslationPage extends LitElement {
  static styles = [base, css`
    :host { display: block; flex: 1; min-width: 0; overflow: hidden; background: #f0f0f1; padding: 0 36px 0 39px; color: #363636; font-size: 21px; }
    .glossary { background: #f7fbfc; border: 1px solid #2e7c92; border-top: 0; border-radius: 0 0 8px 8px; height: 431px; padding: 23px 119px 0; color: #666; }
    .lead { line-height: 42px; }
    .glossary ul { margin-top: 21px; padding-left: 49px; list-style: disc; }
    .glossary li { line-height: 41px; }
    .more { display: flex; align-items: center; gap: 12px; color: #2e7c92; margin-top: 24px; line-height: 42px; }
    .more a { text-decoration: underline; text-underline-offset: 4px; }
    .primary { height: 55px; padding: 0 24px; margin-top: 24px; border-radius: 5px; background: #2e7c92; color: #fff; font-size: 22px; }
    .tabs { display: flex; align-items: flex-end; margin: 37px 0 0 3px; position: relative; z-index: 1; }
    .tab { display: flex; flex-direction: column; align-items: flex-start; justify-content: flex-start; white-space: nowrap; height: 104px; margin-left: -1px; padding: 14px 19px 0 20px; background: #dcdcde; border: 1px solid #c3c4c7; border-radius: 10px 10px 0 0; margin-bottom: -1px; }
    .tab.on { height: 116px; padding: 32px 20px 0 21px; margin-left: 0; background: #fff; border-bottom: 0; }
    .tab b { font-size: 21px; font-weight: 600; line-height: 34px; color: #363636; }
    .tab span { font-size: 20px; line-height: 34px; color: #666; }
    .panel { margin-left: 3px; background: #fff; border: 1px solid #c3c4c7; border-bottom: 0; padding: 25px; display: grid; gap: 27px; min-height: 640px; align-content: start; }
    .card { border-radius: 10px; border: 0 solid; border-left-width: 7px; display: flex; }
    .auto { height: 198px; background: #e9e9e9; border: 1px solid #c3c4c7; border-left: 7px solid #363636; padding: 0 53px 0 43px; align-items: center; }
    .auto .copy { margin-left: 20px; padding-bottom: 5px; display: grid; gap: 13px; }
    .auto h2 { font-size: 29px; font-weight: 600; line-height: 38px; color: #222; }
    .auto p { font-size: 23px; line-height: 34px; color: #666; }
    .auto > ui-icon { padding-bottom: 44px; }
    .switch { margin-left: auto; display: flex; align-items: center; gap: 22px; color: #222; padding-bottom: 16px; font-size: 23px; }
    .switch input { appearance: none; margin: 0; width: 115px; height: 63px; border-radius: 14px; background: #363636; padding: 10px; display: flex; }
    .switch input::before { content: ""; width: 43px; height: 43px; border-radius: 6px; background: radial-gradient(circle, #fff 9px, #363636 10px, #363636 12px, #fff 13px); }
    .switch input:checked { justify-content: flex-end; background: #2e7c92; }
    .notice { background: #fff6ec; border-color: #e8ad55; padding: 21px 35px; gap: 21px; align-items: center; font-size: 23px; line-height: 37px; }
    .status { background: #e9f1f3; border-color: #2e7c92; padding: 33px 44px; display: block; min-height: 320px; }
    .status h2 { font-size: 29px; font-weight: 600; line-height: 38px; color: #222; }
    .job { display: flex; align-items: center; gap: 21px; margin-top: 62px; line-height: 42px; margin-left: -3px; }
  `];

  @state() private current = 0;
  @state() private auto = false;

  render() {
    return html`
      <section class="glossary">
        <p class="lead">Es sieht so aus, als würden Sie das Glossar noch nicht verwenden. Da</p>
        <ul>
          <li>Die Qualität der Übersetzung verbessern</li>
          <li>Übersetzungskonsistenz sicherstellen</li>
          <li>Übersetzungskosten senken</li>
          <li>SEO in den Übersetzungssprachen verbessern</li>
        </ul>
        <p class="more"><a href="#">So verwenden Sie das Glossar für genaue Übersetzungen</a><ui-icon name="help" .size=${22}></ui-icon></p>
        <button class="primary">Glossarbegriffe hinzufügen</button>
      </section>
      <div class="tabs" role="tablist">
        ${pageTabs.map(([title, sub], i) => html`
          <button role="tab" aria-selected=${i === this.current} class=${classMap({ tab: true, on: i === this.current })} @click=${() => (this.current = i)}>
            <b>${title}</b><span>${sub}</span>
          </button>`)}
      </div>
      <div class="panel">
        <section class="card auto">
          <ui-icon name="bolt" .size=${40}></ui-icon>
          <div class="copy">
            <h2>Alles automatisch übersetzen</h2>
            <p>Alle Deutsch Inhalte automatisch nach Englisch, Spanisch übersetzen.</p>
          </div>
          <label class="switch">AUS
            <input type="checkbox" role="switch" aria-label="Alles automatisch übersetzen" .checked=${this.auto} @change=${() => (this.auto = !this.auto)} />
            EIN</label>
        </section>
        <section class="card notice">
          <ui-icon name="warn" .size=${29}></ui-icon>
          <p>Wir empfehlen, auf dieser Seite zu bleiben, um den Fortschritt zu überwachen und auf eventuelle Probleme zu reagieren. Sie können diese Seite verlassen, sollten aber im WordPress-Adminbereich bleiben.</p>
        </section>
        <section class="card status">
          <h2>Übersetzungsstatus</h2>
          <p class="job"><ui-icon name="spinner" .size=${33}></ui-icon><span><b>4 automatische Übersetzungen</b> sind im Gange</span></p>
        </section>
      </div>`;
  }
}

/* ---------- taskbar ---------- */

@customElement("task-bar")
export class TaskBar extends LitElement {
  static styles = [base, css`
    :host { display: flex; flex: none; height: 50px; background: #1c1c1c; color: #fff; }
    .start { width: 60px; }
    .find { width: 430px; display: flex; align-items: center; gap: 14px; padding: 0 14px; background: #f0f0f0; border: 1px solid #c4c4c4; }
    .find input { flex: 1; min-width: 0; border: 0; outline: 0; background: none; font: inherit; font-size: 18px; padding: 0; }
    .find input::placeholder { color: #333; opacity: 1; }
    .task { width: 62px; height: 50px; border-bottom: 3px solid transparent; position: relative; padding-top: 2px; }
    .task.current { background: #4b4b4b; border-color: #76b9ed; }
    .task.running::after { content: ""; position: absolute; left: 6px; right: 6px; bottom: -3px; height: 3px; background: #76b9ed; }
    .tray { margin-left: auto; display: flex; align-items: center; }
    .icons { display: flex; align-items: center; gap: 8px; }
    .clock { width: 92px; text-align: center; font-size: 15px; line-height: 23px; margin: 0 9px 0 1px; }
    .info { margin-right: 11px; }
    .peek { width: 5px; height: 50px; border-left: 1px solid #5a5a5a; }
  `];
  render() {
    return html`
      <button class="start" aria-label="Start"><ui-icon name="windows" .size=${20}></ui-icon></button>
      <label class="find"><ui-icon name="lens" .size=${21}></ui-icon><input type="search" aria-label="Suche" placeholder="Zur Suche Text hier eingeben" /></label>
      ${tasks.map(([icon, label, mode]) => html`
        <button aria-label=${label} class=${classMap({ task: true, running: mode === "running", current: mode === "current" })}>
          <ui-icon .name=${icon} .size=${icon === "taskview" ? 22 : 30}></ui-icon>
        </button>`)}
      <div class="tray">
        <div class="icons">
          <ui-icon name="caret" .size=${22}></ui-icon>
          <ui-icon name="meet" .size=${22}></ui-icon>
          <ui-icon name="network" .size=${22}></ui-icon>
          <ui-icon name="volume" .size=${22}></ui-icon>
        </div>
        <time class="clock">20:28<br />20.04.2026</time>
        <button class="info" aria-label="Benachrichtigungen"><ui-icon name="note" .size=${38}></ui-icon></button>
        <span class="peek"></span>
      </div>`;
  }
}

@customElement("app-root")
export class AppRoot extends LitElement {
  static styles = [base, css`
    :host { display: flex; flex-direction: column; height: 100vh; overflow: hidden; font-family: "Open Sans", "Noto Sans", sans-serif; }
    .view { flex: 1; min-height: 0; display: flex; }
    .site { flex: 1; min-width: 0; display: flex; flex-direction: column; }
    .body { flex: 1; min-height: 0; display: flex; }
    .scroll { width: 19px; flex: none; background: #fcfcfc; display: flex; flex-direction: column; align-items: center; padding: 8px 0 7px; }
    .thumb { width: 10px; height: 97px; border-radius: 5px; background: #8b8b8b; margin-top: 25px; }
    .down { margin-top: auto; }
    svg { display: block; }
  `];
  render() {
    return html`
      <browser-chrome></browser-chrome>
      <div class="view">
        <div class="site">
          <admin-bar></admin-bar>
          <div class="body">
            <admin-menu></admin-menu>
            <translation-page></translation-page>
          </div>
        </div>
        <div class="scroll" aria-hidden="true">
          <svg width="13" height="7" viewBox="0 0 13 7"><path d="M0 7 6.500 0 13 7z" fill="#8b8b8b"/></svg>
          <div class="thumb"></div>
          <svg class="down" width="13" height="7" viewBox="0 0 13 7"><path d="M0 0l6.500 7L13 0z" fill="#8b8b8b"/></svg>
        </div>
      </div>
      <task-bar></task-bar>`;
  }
}
